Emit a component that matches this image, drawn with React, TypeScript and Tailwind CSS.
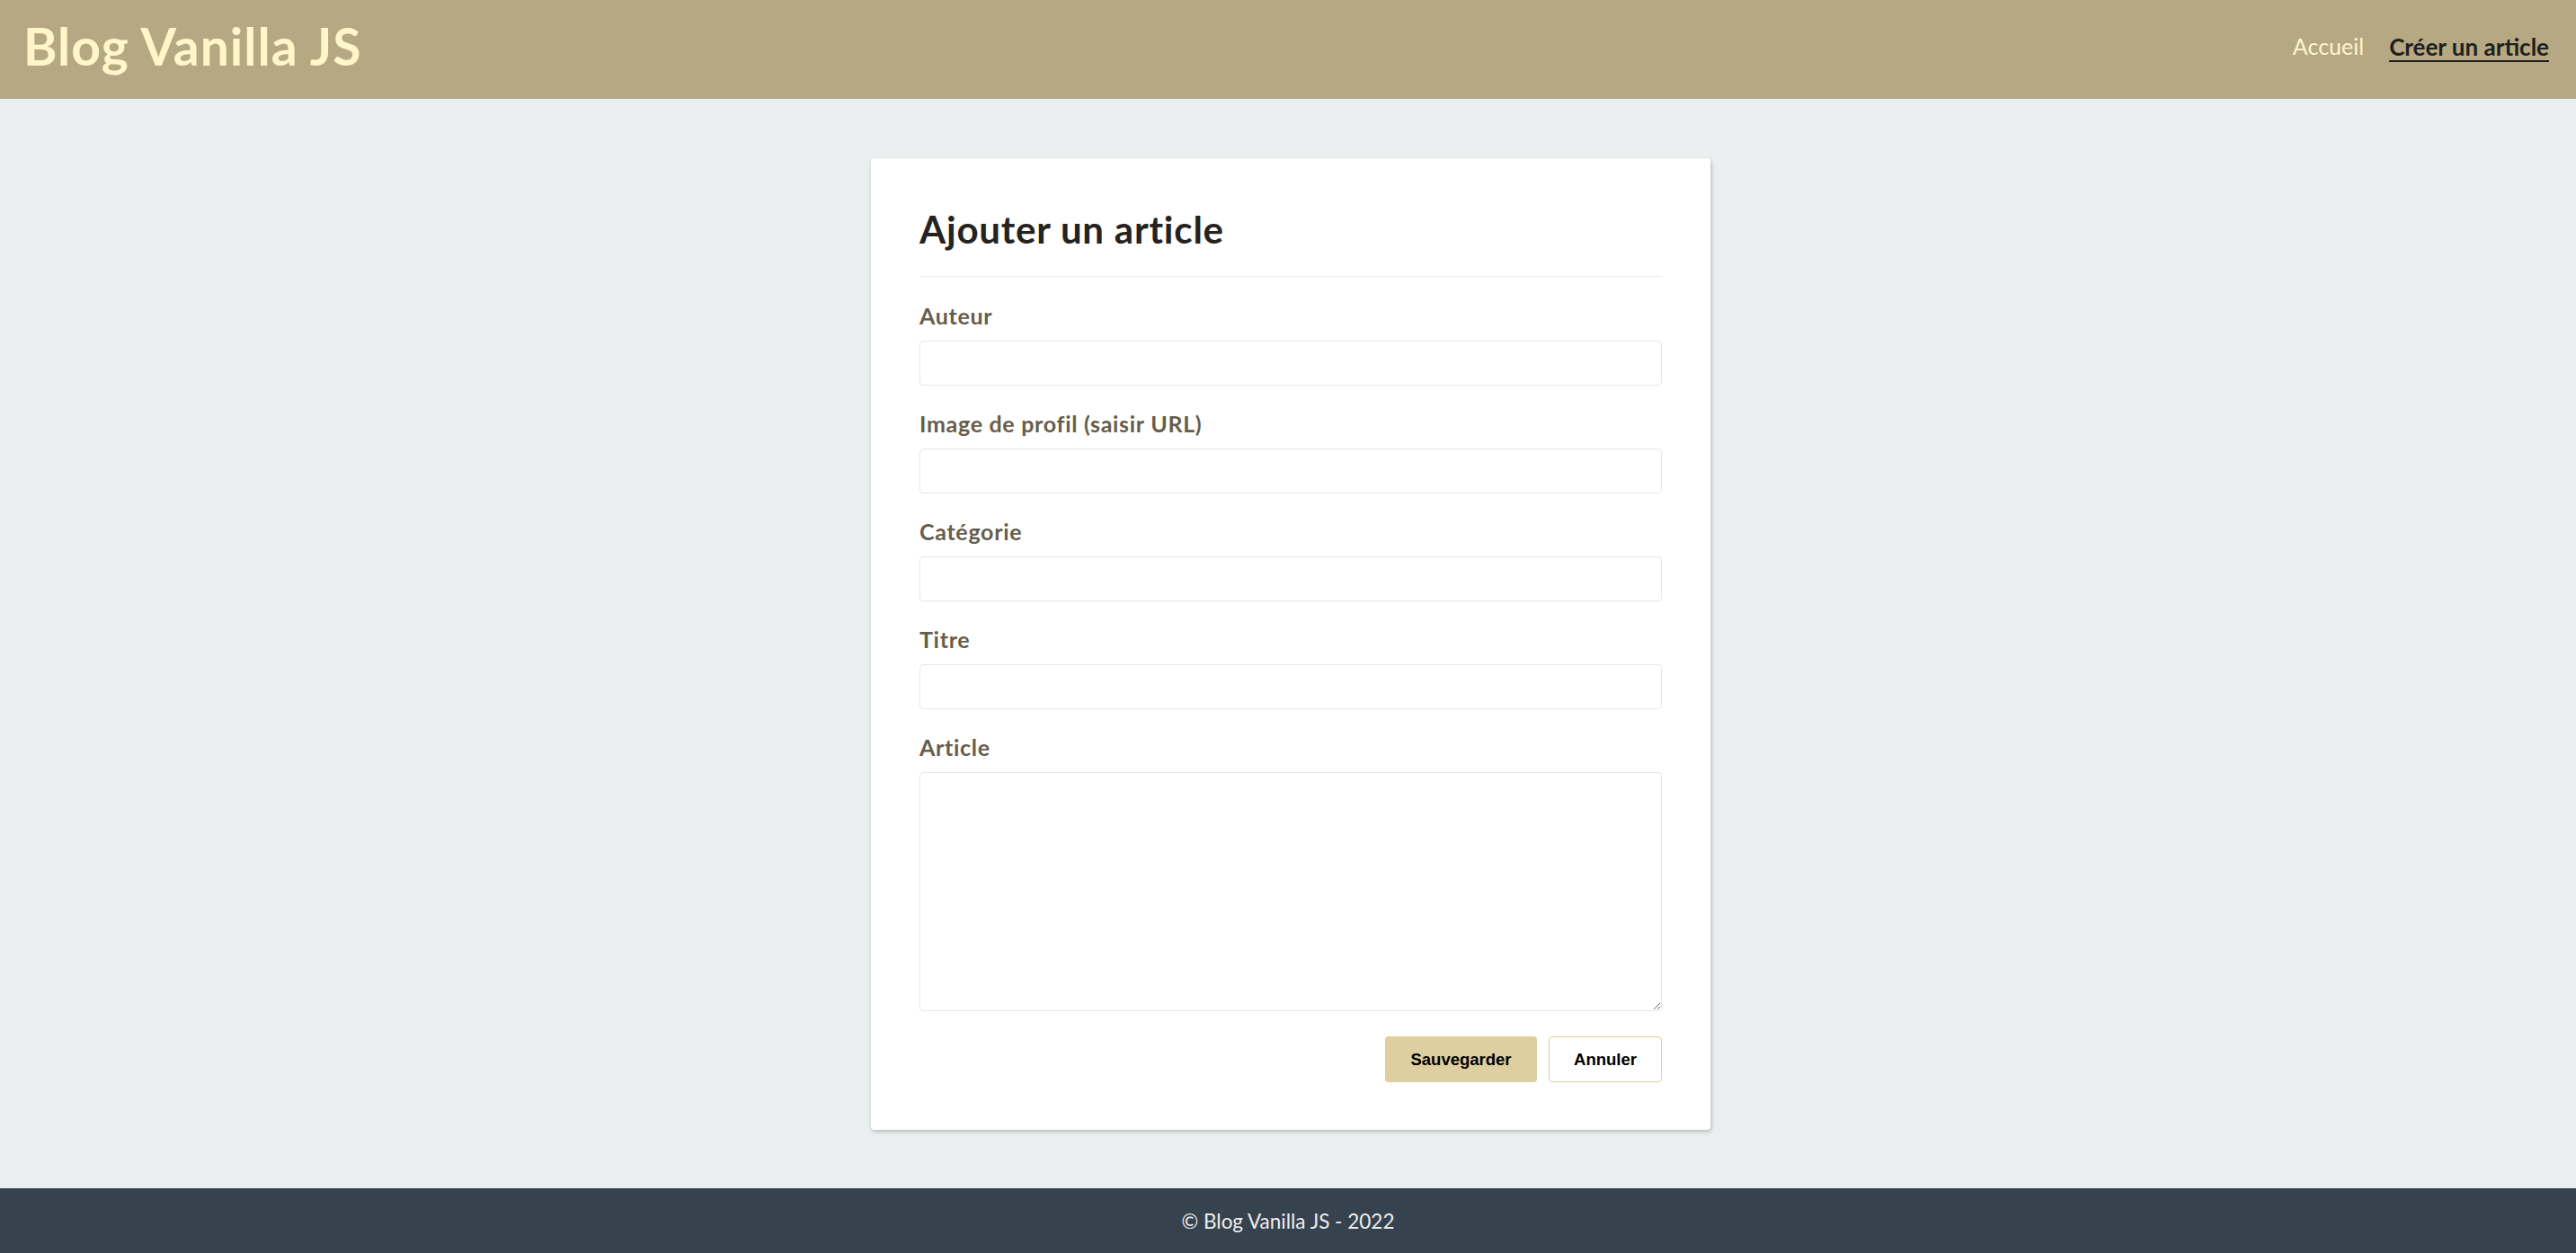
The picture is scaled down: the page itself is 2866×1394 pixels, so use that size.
const fields = [
  { id: "auteur", label: "Auteur" },
  { id: "image", label: "Image de profil (saisir URL)" },
  { id: "categorie", label: "Catégorie" },
  { id: "titre", label: "Titre" },
];

function Field({ id, label }: { id: string; label: string }) {
  return (
    <div className="flex flex-col">
      <label htmlFor={id} className="text-[25px] leading-[28px] font-bold tracking-[0.7px] text-[#675d4a]">
        {label}
      </label>
      <input
        id={id}
        type="text"
        className="mt-[14px] h-[50px] w-full rounded-[4px] border border-[#e7e7e7] bg-white px-3 outline-none"
      />
    </div>
  );
}

export default function App() {
  return (
    <div className="flex min-h-screen flex-col bg-[#eaeeef] font-['Lato',sans-serif]">
      <header className="flex h-[110px] items-center justify-between bg-[#b5a882] pb-[7px] pl-[26px] pr-[30px]">
        <h1 className="text-[57px] leading-none font-bold tracking-[1px] text-[#fff6c9]">Blog Vanilla JS</h1>
        <nav className="flex items-center gap-[28px] leading-none">
          <a href="#" className="text-[25px] text-[#fff6d0]">
            Accueil
          </a>
          <a href="#" className="text-[26px] font-bold text-[#1f1f1d] underline underline-offset-[5px] decoration-2">
            Créer un article
          </a>
        </nav>
      </header>

      <main className="flex flex-1 justify-center pt-[66px] pb-[65px] pl-[6px]">
        <div className="w-[934px] rounded-[4px] bg-white px-[54px] pt-[58px] pb-[53px] shadow-[1px_2px_4px_rgba(0,0,0,0.22)]">
          <h2 className="text-[42px] leading-none font-bold tracking-[0.8px] text-[#26231e]">Ajouter un article</h2>
          <div className="mt-[31px] h-px bg-[#ececec]" />

          <form className="mt-[29px] flex flex-col gap-[28px]" onSubmit={(e) => e.preventDefault()}>
            {fields.map((f) => (
              <Field key={f.id} id={f.id} label={f.label} />
            ))}
            <div className="flex flex-col">
              <label htmlFor="article" className="text-[25px] leading-[28px] font-bold tracking-[0.7px] text-[#675d4a]">
                Article
              </label>
              <textarea
                id="article"
                className="mt-[14px] h-[266px] w-full rounded-[4px] border border-[#e7e7e7] bg-white p-3 outline-none"
              />
            </div>
            <div className="flex justify-end gap-[13px] font-['Liberation_Sans',Arial,sans-serif] text-[18.5px] font-bold text-black">
              <button type="submit" className="h-[51px] w-[169px] rounded-[4px] bg-[#ddcf9f]">
                Sauvegarder
              </button>
              <button type="button" className="h-[51px] w-[126px] rounded-[4px] border border-[#ddcf9f] bg-white">
                Annuler
              </button>
            </div>
          </form>
        </div>
      </main>

      <footer className="flex h-[73px] items-center justify-center bg-[#37424f] text-[22.5px] text-[#eeeeee]">
        © Blog Vanilla JS - 2022
      </footer>
    </div>
  );
}
